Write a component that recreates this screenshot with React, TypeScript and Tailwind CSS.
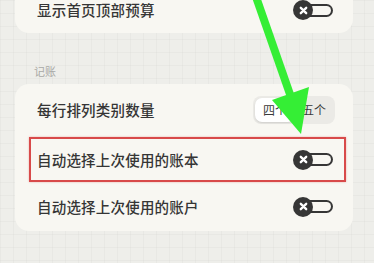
import React from "react";

const font = { fontFamily: '"Noto Sans CJK SC", "Noto Sans", sans-serif' };

function Toggle() {
  return (
    <div className="flex items-center w-[40px] h-[20px]">
      <div className="relative z-10 flex items-center justify-center w-[20px] h-[20px] rounded-full bg-[#363636]">
        <svg width="9" height="9" viewBox="0 0 10 10">
          <path d="M2 2 L8 8 M8 2 L2 8" stroke="#fff" strokeWidth="2.6" strokeLinecap="round" />
        </svg>
      </div>
      <div className="-ml-[6px] w-[26px] h-[13px] rounded-r-full border-2 border-l-0 border-[#363636]" />
    </div>
  );
}

function Row({ label, children, className = "" }: { label: string; children: React.ReactNode; className?: string }) {
  return (
    <div className={`flex items-center justify-between ${className}`}>
      <span className="text-[14.5px] font-medium text-[#353535] tracking-[0.2px]">{label}</span>
      {children}
    </div>
  );
}

export default function App() {
  return (
    <div
      style={font}
      className="relative h-[263px] w-[374px] overflow-hidden bg-[#eeeeea] bg-[linear-gradient(to_right,rgba(0,0,0,0.022)_1px,transparent_1px),linear-gradient(to_bottom,rgba(0,0,0,0.022)_1px,transparent_1px)] bg-[size:13px_13px]"
    >
      <div className="ml-[15px] w-[338px] -mt-[13px] h-[46px] rounded-[14px] bg-[#f8f7f2] pl-[22px] pr-[20px]">
        <Row label="显示首页顶部预算" className="h-full">
          <Toggle />
        </Row>
      </div>

      <div className="mt-[30px] pl-[34px] text-[11px] leading-[16px] text-[#a9a9a6]">记账</div>

      <div className="ml-[15px] w-[338px] mt-[5px] h-[147px] rounded-[14px] bg-[#f8f7f2]">
        <Row label="每行排列类别数量" className="h-[51px] pl-[22px] pr-[18px]">
          <div className="flex h-[28px] items-center rounded-[8px] bg-[#ebeae6] p-[2px] text-[12px] text-[#3a3a3a]">
            <div className="flex h-full w-[40px] items-center justify-center rounded-[7px] bg-white shadow-[0_1px_2px_rgba(0,0,0,0.12)]">
              四个
            </div>
            <div className="flex h-full w-[38px] items-center justify-center">五个</div>
          </div>
        </Row>
        <div className="mt-[2px] ml-[14px] mr-[7px] h-[45px] border-2 border-[#d84a4a] shadow-[0_0_2px_rgba(216,74,74,0.4)]">
          <Row label="自动选择上次使用的账本" className="h-full pl-[6px] pr-[11px]">
            <Toggle />
          </Row>
        </div>
        <Row label="自动选择上次使用的账户" className="h-[49px] pl-[22px] pr-[20px]">
          <Toggle />
        </Row>
      </div>

      <svg className="pointer-events-none absolute left-0 top-0" width="374" height="263" viewBox="0 0 374 263">
        <line x1="255" y1="-6" x2="292" y2="100" stroke="#35ee35" strokeWidth="8" />
        <polygon points="272,100 309,87 301,134" fill="#35ee35" />
      </svg>
    </div>
  );
}
